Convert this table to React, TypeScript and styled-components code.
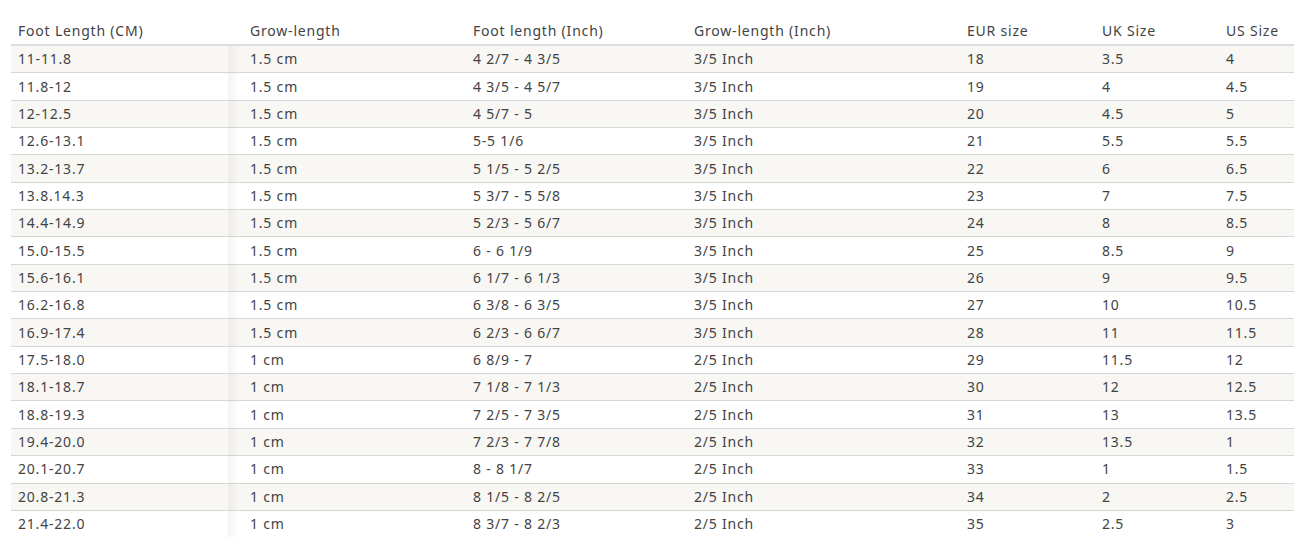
import styled, { createGlobalStyle } from "styled-components";

const GlobalStyle = createGlobalStyle`
  body {
    margin: 0;
    background: #ffffff;
    font-family: "Noto Sans", "Open Sans", sans-serif;
    overflow: hidden;
  }
`;

const headers = [
  "Foot Length (CM)",
  "Grow-length",
  "Foot length (Inch)",
  "Grow-length (Inch)",
  "EUR size",
  "UK Size",
  "US Size",
];

const widths = [232, 223, 221, 273, 135, 124, 100];

const rows: string[][] = [
  ["11-11.8", "1.5 cm", "4 2/7 - 4 3/5", "3/5 Inch", "18", "3.5", "4"],
  ["11.8-12", "1.5 cm", "4 3/5 - 4 5/7", "3/5 Inch", "19", "4", "4.5"],
  ["12-12.5", "1.5 cm", "4 5/7 - 5", "3/5 Inch", "20", "4.5", "5"],
  ["12.6-13.1", "1.5 cm", "5-5 1/6", "3/5 Inch", "21", "5.5", "5.5"],
  ["13.2-13.7", "1.5 cm", "5 1/5 - 5 2/5", "3/5 Inch", "22", "6", "6.5"],
  ["13.8.14.3", "1.5 cm", "5 3/7 - 5 5/8", "3/5 Inch", "23", "7", "7.5"],
  ["14.4-14.9", "1.5 cm", "5 2/3 - 5 6/7", "3/5 Inch", "24", "8", "8.5"],
  ["15.0-15.5", "1.5 cm", "6 - 6 1/9", "3/5 Inch", "25", "8.5", "9"],
  ["15.6-16.1", "1.5 cm", "6 1/7 - 6 1/3", "3/5 Inch", "26", "9", "9.5"],
  ["16.2-16.8", "1.5 cm", "6 3/8 - 6 3/5", "3/5 Inch", "27", "10", "10.5"],
  ["16.9-17.4", "1.5 cm", "6 2/3 - 6 6/7", "3/5 Inch", "28", "11", "11.5"],
  ["17.5-18.0", "1 cm", "6 8/9 - 7", "2/5 Inch", "29", "11.5", "12"],
  ["18.1-18.7", "1 cm", "7 1/8 - 7 1/3", "2/5 Inch", "30", "12", "12.5"],
  ["18.8-19.3", "1 cm", "7 2/5 - 7 3/5", "2/5 Inch", "31", "13", "13.5"],
  ["19.4-20.0", "1 cm", "7 2/3 - 7 7/8", "2/5 Inch", "32", "13.5", "1"],
  ["20.1-20.7", "1 cm", "8 - 8 1/7", "2/5 Inch", "33", "1", "1.5"],
  ["20.8-21.3", "1 cm", "8 1/5 - 8 2/5", "2/5 Inch", "34", "2", "2.5"],
  ["21.4-22.0", "1 cm", "8 3/7 - 8 2/3", "2/5 Inch", "35", "2.5", "3"],
];

function App() {
  return (
    <>
      <GlobalStyle />
      <Wrapper>
        <Table>
          <colgroup>
            {widths.map((w, i) => (
              <col key={i} style={{ width: w }} />
            ))}
          </colgroup>
          <thead>
            <tr>
              {headers.map((h, i) => (
                <HeadCell key={i}>{h}</HeadCell>
              ))}
            </tr>
          </thead>
          <tbody>
            {rows.map((row, r) => (
              <Row key={r} $striped={r % 2 === 0}>
                {row.map((cell, c) => (
                  <Cell key={c} $first={c === 0}>
                    {cell}
                  </Cell>
                ))}
              </Row>
            ))}
          </tbody>
        </Table>
      </Wrapper>
    </>
  );
}

export default App;

const Wrapper = styled.div`
  padding: 18px 0 0 11px;
  width: 1283px;
  overflow: hidden;
`;

const Table = styled.table`
  border-collapse: collapse;
  table-layout: fixed;
  width: 1308px;
  color: #434343;
  font-size: 14px;
  letter-spacing: 0.8px;
`;

const HeadCell = styled.th`
  text-align: left;
  font-weight: 400;
  height: 26px;
  padding: 0 0 0 7px;
  line-height: 26px;
  white-space: nowrap;
  border-bottom: 2px solid #dcdcdc;
`;

const Row = styled.tr<{ $striped: boolean }>`
  background: ${(p) => (p.$striped ? "#f8f7f3" : "#ffffff")};
`;

const Cell = styled.td<{ $first: boolean }>`
  height: 26.35px;
  padding: 0 0 0 7px;
  line-height: 26px;
  white-space: nowrap;
  border-bottom: 1px solid #d6d6d6;
  position: relative;

  &::after {
    content: "";
    display: ${(p) => (p.$first ? "block" : "none")};
    position: absolute;
    top: 0;
    bottom: 0;
    left: 217px;
    width: 12px;
    background: linear-gradient(to right, rgba(0, 0, 0, 0.045), rgba(0, 0, 0, 0));
    pointer-events: none;
  }
`;
